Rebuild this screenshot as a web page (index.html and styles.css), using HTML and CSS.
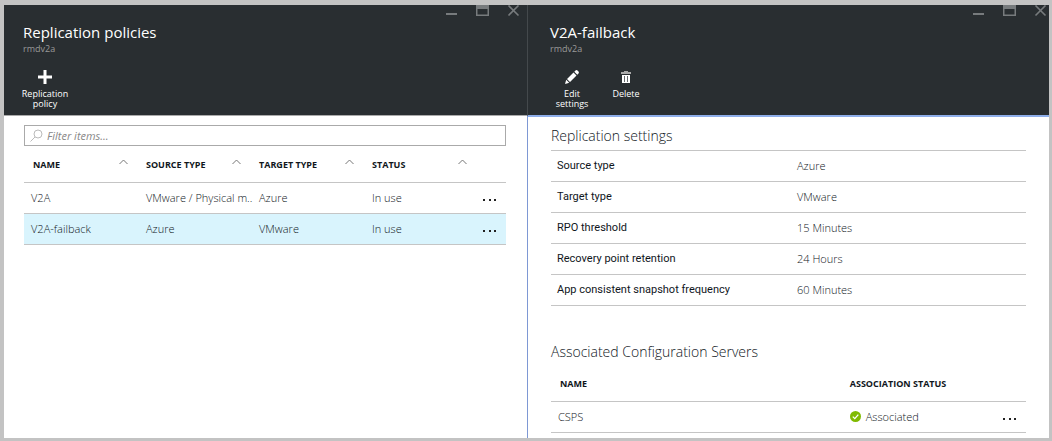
FILE: index.html
```html
<!DOCTYPE html>
<html lang="en">
<head>
<meta charset="utf-8">
<title>Replication policies</title>
<link rel="stylesheet" href="styles.css">
</head>
<body>
<main class="portal">
  <section class="blade blade-list">
    <header class="blade-header">
      <div class="window-controls">
        <button class="window-button" aria-label="Minimize"><svg width="13" height="12" viewBox="0 0 13 12"><path d="M1 9h11" stroke="currentColor" stroke-width="2"/></svg></button>
        <button class="window-button" aria-label="Maximize"><svg width="13" height="12" viewBox="0 0 13 12"><path fill="currentColor" fill-rule="evenodd" d="M0 0h13v11H0zM1.500 4v5.500h10V4z"/></svg></button>
        <button class="window-button" aria-label="Close"><svg width="13" height="12" viewBox="0 0 13 12"><path d="M1.500 .5l10 10M11.500 .5l-10 10" stroke="currentColor" stroke-width="1.600"/></svg></button>
      </div>
      <h1 class="blade-title">Replication policies</h1>
      <p class="blade-subtitle">rmdv2a</p>
      <div class="toolbar">
        <button class="command"><svg width="16" height="16" viewBox="0 0 16 16"><path d="M8 1v14M1 8h14" stroke="#fff" stroke-width="3"/></svg><span>Replication policy</span></button>
      </div>
    </header>
    <div class="blade-body">
      <label class="filter">
        <svg width="13" height="13" viewBox="0 0 13 13" fill="none" stroke="#bbb"><circle cx="8" cy="5" r="4"/><path d="M5 8l-4.500 4.500"/></svg>
        <input class="filter-input" type="text" placeholder="Filter items..." aria-label="Filter items">
      </label>
      <table class="grid policies">
        <colgroup><col class="col"><col class="col"><col class="col"><col class="col"><col class="col-menu"></colgroup>
        <thead>
          <tr>
            <th><span class="sort">NAME <svg width="9" height="6" viewBox="0 0 9 6"><path d="M.5 5l4-4 4 4" fill="none" stroke="#777"/></svg></span></th>
            <th><span class="sort">SOURCE TYPE <svg width="9" height="6" viewBox="0 0 9 6"><path d="M.5 5l4-4 4 4" fill="none" stroke="#777"/></svg></span></th>
            <th><span class="sort">TARGET TYPE <svg width="9" height="6" viewBox="0 0 9 6"><path d="M.5 5l4-4 4 4" fill="none" stroke="#777"/></svg></span></th>
            <th><span class="sort">STATUS <svg width="9" height="6" viewBox="0 0 9 6"><path d="M.5 5l4-4 4 4" fill="none" stroke="#777"/></svg></span></th>
            <th></th>
          </tr>
        </thead>
        <tbody>
          <tr><td>V2A</td><td>VMware / Physical m..</td><td>Azure</td><td>In use</td><td class="menu-cell"><button class="more" aria-label="More actions"><svg width="14" height="4" viewBox="0 0 14 4" fill="#222"><path d="M0 1h2v2H0zM6 1h2v2H6zM11 1h2v2h-2z"/></svg></button></td></tr>
          <tr class="selected"><td>V2A-failback</td><td>Azure</td><td>VMware</td><td>In use</td><td class="menu-cell"><button class="more" aria-label="More actions"><svg width="14" height="4" viewBox="0 0 14 4" fill="#222"><path d="M0 1h2v2H0zM6 1h2v2H6zM11 1h2v2h-2z"/></svg></button></td></tr>
        </tbody>
      </table>
    </div>
  </section>

  <section class="blade blade-detail">
    <header class="blade-header">
      <div class="window-controls">
        <button class="window-button" aria-label="Minimize"><svg width="13" height="12" viewBox="0 0 13 12"><path d="M1 9h11" stroke="currentColor" stroke-width="2"/></svg></button>
        <button class="window-button" aria-label="Maximize"><svg width="13" height="12" viewBox="0 0 13 12"><path fill="currentColor" fill-rule="evenodd" d="M0 0h13v11H0zM1.500 4v5.500h10V4z"/></svg></button>
        <button class="window-button" aria-label="Close"><svg width="13" height="12" viewBox="0 0 13 12"><path d="M1.500 .5l10 10M11.500 .5l-10 10" stroke="currentColor" stroke-width="1.600"/></svg></button>
      </div>
      <h1 class="blade-title">V2A-failback</h1>
      <p class="blade-subtitle">rmdv2a</p>
      <div class="toolbar">
        <button class="command"><svg width="16" height="16" viewBox="0 0 16 16" fill="#fff"><path d="M1 15l1.200-4.200 3 3zM3 10l6.500-6.500 3 3L6 13zM10.300 2.700l1.200-1.200q1-.9 2 0l1 1q.9 1 0 2l-1.200 1.200z"/></svg><span>Edit settings</span></button>
        <button class="command"><svg width="16" height="16" viewBox="0 0 16 16"><path d="M6 2h4v1h3v2H3V3h3z" fill="#aaa"/><path d="M4 6h8v8H4z" fill="#fff"/><path d="M6.500 7v6M9.500 7v6" stroke="#666b6e"/></svg><span>Delete</span></button>
      </div>
    </header>
    <div class="blade-body">
      <h2 class="section-title">Replication settings</h2>
      <dl class="settings">
        <div class="setting"><dt>Source type</dt><dd>Azure</dd></div>
        <div class="setting"><dt>Target type</dt><dd>VMware</dd></div>
        <div class="setting"><dt>RPO threshold</dt><dd>15 Minutes</dd></div>
        <div class="setting"><dt>Recovery point retention</dt><dd>24 Hours</dd></div>
        <div class="setting"><dt>App consistent snapshot frequency</dt><dd>60 Minutes</dd></div>
      </dl>
      <h2 class="section-title servers-title">Associated Configuration Servers</h2>
      <table class="grid servers">
        <colgroup><col class="col-server"><col class="col-status"><col class="col-menu"></colgroup>
        <thead><tr><th>NAME</th><th>ASSOCIATION STATUS</th><th></th></tr></thead>
        <tbody>
          <tr><td>CSPS</td><td><span class="status"><svg width="11" height="11" viewBox="0 0 11 11"><circle cx="5.500" cy="5.500" r="5.500" fill="#7fba00"/><path d="M2.800 5.600l2 2 3.500-4" fill="none" stroke="#fff" stroke-width="1.300"/></svg>Associated</span></td><td class="menu-cell"><button class="more" aria-label="More actions"><svg width="14" height="4" viewBox="0 0 14 4" fill="#222"><path d="M0 1h2v2H0zM6 1h2v2H6zM11 1h2v2h-2z"/></svg></button></td></tr>
        </tbody>
      </table>
    </div>
  </section>
</main>
</body>
</html>
```
FILE: styles.css
```css
* { box-sizing: border-box; }
body {
  margin: 0;
  background: #c3c3c3;
  color: #10161c;
  font: 11px/16px "Open Sans", "Noto Sans", sans-serif;
}
button {
  padding: 0;
  border: 0;
  background: none;
  color: inherit;
  font: inherit;
}
svg { display: block; flex: none; }
.portal {
  display: grid;
  grid-template-columns: 523fr 522fr;
  min-height: 100vh;
  padding: 5px 3px 3px 4px;
}
.blade { display: flex; flex-direction: column; background: #fff; }
.blade-header {
  position: relative;
  height: 111px;
  padding: 17px 19px 0;
  background: #292e31;
  border-bottom: 1px solid #aaa;
  color: #fff;
}
.blade-detail .blade-header {
  height: 112px;
  padding-left: 22px;
  border-left: 1px solid #44494c;
  border-bottom: 2px solid #8eaeea;
}
.blade-title { margin: 0; font-size: 15px; line-height: 20px; font-weight: 400; }
.blade-subtitle { margin: 0; font-size: 9px; line-height: 13px; color: #999; }
.window-controls {
  position: absolute;
  top: 0;
  right: 7px;
  display: flex;
  gap: 18px;
  color: #777b7d;
}
.blade-detail .window-controls { right: 2px; }
.toolbar { display: flex; gap: 10px; margin-top: 14px; }
.command {
  display: flex;
  flex-direction: column;
  align-items: center;
  gap: 4px;
  width: 44px;
  font-size: 9px;
  line-height: 10px;
}
.blade-body { flex: 1; padding: 9px 21px 0 20px; }
.blade-detail .blade-body { padding: 9px 23px 0; border-left: 1px solid #7e98d4; }
.filter {
  display: flex;
  align-items: center;
  gap: 4px;
  height: 21px;
  padding: 0 5px;
  border: 1px solid #aaa;
}
.filter-input {
  flex: 1;
  min-width: 0;
  padding: 0;
  border: 0;
  outline: 0;
  background: none;
  font: inherit;
}
.filter-input::placeholder { color: #888; font-style: italic; }
.grid { width: 100%; border-collapse: collapse; table-layout: fixed; }
.grid th, .grid td {
  height: 31px;
  padding: 0 0 0 9px;
  border-bottom: 1px solid #c5c5c5;
  font-weight: 300;
  text-align: left;
  white-space: nowrap;
}
.grid th { height: 36px; padding-top: 2px; font-size: 9px; font-weight: 700; }
.grid td:first-child { padding-left: 7px; }
.grid .menu-cell { vertical-align: bottom; padding: 0 0 7px 7px; }
.col-menu { width: 30px; }
.col-server { width: 61%; }
.sort { display: flex; justify-content: space-between; padding-right: 9px; }
.sort svg { margin-top: 2px; }
.selected { background: #d9f4fd; }
.section-title { margin: 0; font-size: 14px; line-height: 20px; font-weight: 300; padding-bottom: 4px; }
.settings { margin: 0; border-top: 1px solid #c5c5c5; }
.setting {
  display: grid;
  grid-template-columns: 240fr 229fr;
  align-items: center;
  height: 31px;
  padding-left: 6px;
  border-bottom: 1px solid #c5c5c5;
}
.setting dt { font-family: Roboto, "Open Sans", sans-serif; }
.setting dd { margin: 0; font-weight: 300; }
.servers-title { margin-top: 36px; padding-bottom: 3px; }
.status { display: flex; align-items: center; gap: 5px; }
```
